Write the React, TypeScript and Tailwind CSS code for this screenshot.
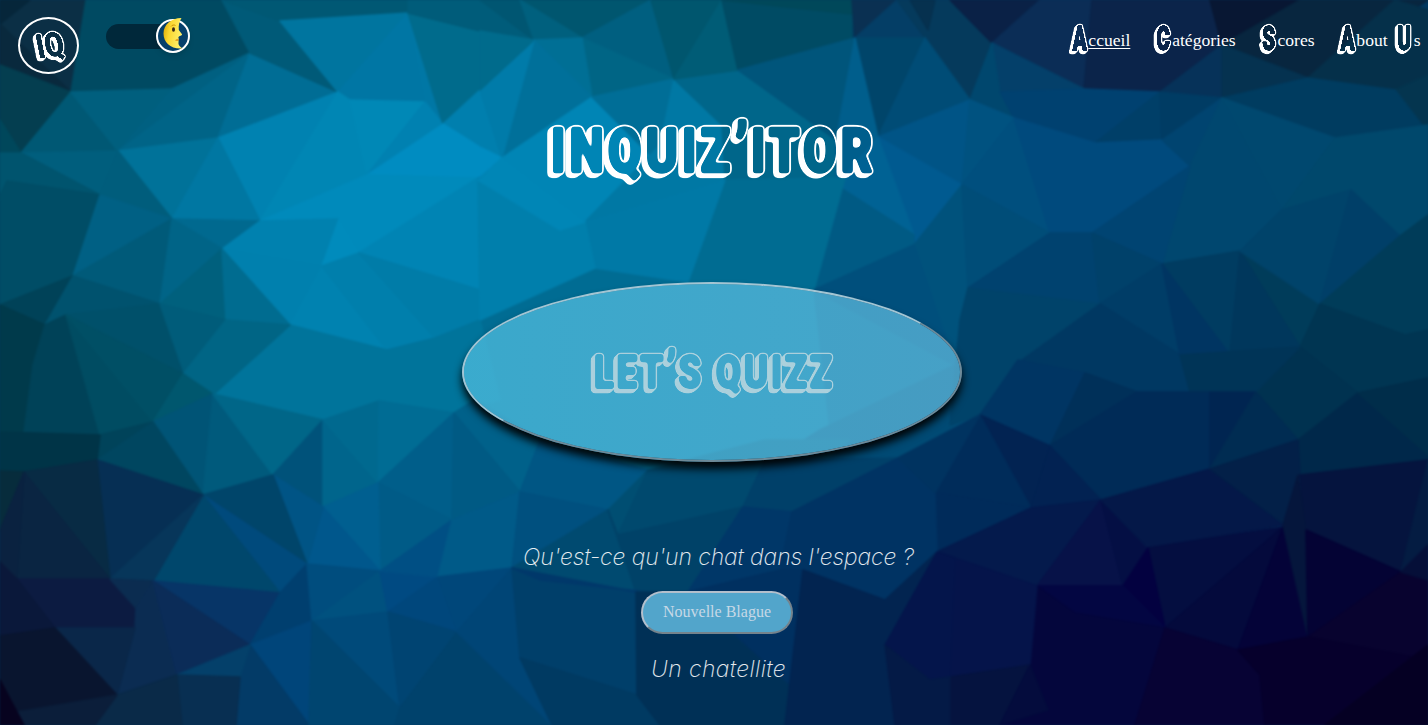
import React from "react";

type Facet = [string, string];

const FACETS: Facet[] = [
  ["480,320 595,268 688,282 814,290 970,300 980,415 898,470 648,480 454,430", "#006c93"],
  ["814,290 970,300 980,415 898,460 830,430", "#005a84"],
  ["955,365 980,415 898,462 765,465 820,430", "#004a74"],
  ["700,480 648,470 765,440 850,440 800,480", "#005578"],
  ["0,0 86,0 71,92 0,65", "#0b2f45"],
  ["0,24 30,0 0,0", "#06263a"],
  ["0,24 71,92 0,65", "#09293d"],
  ["0,65 71,92 21,153 0,120", "#043e50"],
  ["0,120 21,153 0,153", "#00475b"],
  ["86,0 222,0 250,53 172,89 71,92", "#004a62"],
  ["71,92 21,153 118,151", "#005874"],
  ["71,92 172,89 118,151", "#005f7e"],
  ["172,89 250,53 118,151", "#006081"],
  ["250,53 218,138 118,151", "#006487"],
  ["250,53 338,92 218,138", "#006d95"],
  ["250,53 222,0 280,21 338,92", "#005a78"],
  ["222,0 408,0 408,13 280,21", "#005874"],
  ["280,21 408,13 338,92", "#00759f"],
  ["408,13 425,102 350,100 338,92", "#0076a4"],
  ["338,92 218,138 260,221", "#0082b1"],
  ["338,92 260,221 367,175 350,100", "#0086b4"],
  ["118,151 218,138 172,219", "#007299"],
  ["218,138 260,221 172,219", "#0077a2"],
  ["350,100 425,102 367,175 359,140", "#0088b6"],
  ["408,13 443,124 425,102", "#0077a5"],
  ["425,102 443,124 367,175", "#0081b1"],
  ["408,13 480,31 480,90 443,124", "#006b8c"],
  ["480,90 502,158 443,124", "#007fae"],
  ["443,124 480,147 502,158 478,178 367,175", "#008cc1"],
  ["367,175 478,178 359,253 339,219 260,221", "#008abb"],
  ["172,219 260,221 222,249", "#00698f"],
  ["260,221 339,219 322,266 222,249", "#0081af"],
  ["339,219 359,253 322,266", "#008bbc"],
  ["478,178 480,290 359,253", "#0084b4"],
  ["222,249 322,266 290,325", "#0080ae"],
  ["322,266 387,350 290,325", "#0082b0"],
  ["322,266 359,253 435,338 387,350", "#007fac"],
  ["359,253 480,290 480,320 435,338", "#007ca8"],
  ["290,325 387,350 435,338 480,320 500,400 454,413 379,401 323,420 213,394", "#00749b"],
  ["21,153 118,151 100,195", "#005e7d"],
  ["118,151 172,219 100,195", "#005d7c"],
  ["0,153 21,153 100,195 7,181 0,200", "#00546e"],
  ["7,181 100,195 73,276 0,305 0,195", "#004d66"],
  ["100,195 172,219 73,276", "#006084"],
  ["172,219 73,276 160,304", "#005a79"],
  ["172,219 222,249 160,304", "#006487"],
  ["222,249 226,320 160,304", "#00607d"],
  ["222,249 290,325 226,320", "#006c90"],
  ["73,276 0,305 45,325", "#004258"],
  ["73,276 160,304 66,315 45,325", "#00526e"],
  ["66,315 160,304 183,374", "#00506a"],
  ["0,305 45,325 33,365 24,432 0,432", "#003a4b"],
  ["160,304 226,320 184,373", "#005c7a"],
  ["226,320 290,325 213,395 184,373", "#006585"],
  ["45,325 66,315 100,435 24,432 33,365", "#004258"],
  ["66,315 153,422 100,435", "#004c62"],
  ["66,315 183,374 153,422", "#004f65"],
  ["183,374 213,394 153,422", "#00576e"],
  ["153,422 213,394 203,495", "#005476"],
  ["213,394 273,475 203,495", "#005a7c"],
  ["100,435 153,422 97,460", "#00435a"],
  ["97,460 153,422 203,495", "#004660"],
  ["0,432 100,435 97,460 24,472 0,471", "#003447"],
  ["213,394 323,420 273,475", "#006688"],
  ["323,420 323,507 273,475", "#00527a"],
  ["323,420 378,483 323,507", "#00658c"],
  ["323,420 379,401 378,483", "#00698f"],
  ["379,401 454,413 378,483", "#006c94"],
  ["454,413 452,520 378,483", "#005e8a"],
  ["378,483 452,520 380,571", "#005b87"],
  ["323,507 378,483 380,571", "#005f90"],
  ["323,507 380,571 307,564", "#00578c"],
  ["273,475 323,507 307,564", "#005485"],
  ["203,495 273,475 307,564", "#00456a"],
  ["203,495 307,564 280,593", "#004a7c"],
  ["203,495 280,593 153,581", "#00476c"],
  ["97,460 203,495 110,579", "#062f54"],
  ["203,495 153,581 110,579", "#07365a"],
  ["24,472 97,460 110,579", "#082b44"],
  ["24,472 110,579 17,579", "#0a2542"],
  ["0,471 24,472 0,530", "#072c3c"],
  ["24,472 17,579 0,562 0,530", "#0a2240"],
  ["17,579 110,579 136,608 135,628 55,628", "#0c1b41"],
  ["110,579 153,581 136,608", "#0b2c50"],
  ["153,581 177,675 117,695 135,628 136,608", "#0b2c52"],
  ["55,628 135,628 117,695", "#0a2749"],
  ["0,562 17,579 55,628 0,636", "#0a183a"],
  ["0,636 55,628 117,695 17,712 0,680", "#09152f"],
  ["153,581 280,593 250,645", "#073567"],
  ["153,581 250,645 177,675", "#0b2c58"],
  ["280,593 307,564 312,621 250,645", "#003f6f"],
  ["250,645 312,621 309,725", "#00457a"],
  ["250,645 309,725 236,725 240,677", "#033b67"],
  ["250,645 177,675 240,677", "#04406a"],
  ["177,675 240,677 236,725 182,725", "#082f52"],
  ["117,695 177,675 182,725 95,725", "#0a2a48"],
  ["17,712 117,695 95,725 24,725", "#0b1e3a"],
  ["0,680 17,712 24,725 0,725", "#07031f"],
  ["307,564 380,571 312,621", "#004d7e"],
  ["380,571 388,612 312,621", "#00517f"],
  ["312,621 388,612 400,708", "#004a7a"],
  ["312,621 400,708 395,725 309,725", "#004570"],
  ["380,571 438,577 388,612", "#004a82"],
  ["452,520 438,577 380,571", "#004f84"],
  ["388,612 438,577 457,632", "#00477c"],
  ["388,612 457,632 400,708", "#004472"],
  ["457,632 500,620 552,725 395,725 400,708", "#00426c"],
  ["408,0 520,0 534,40 480,31 408,13", "#005c7a"],
  ["480,0 520,0 534,40", "#005672"],
  ["520,0 651,0 582,38 534,20", "#00566f"],
  ["520,0 582,38 534,40", "#00607e"],
  ["582,38 651,0 674,79", "#005f80"],
  ["582,38 674,79 592,97", "#006585"],
  ["534,40 582,38 592,97", "#006f95"],
  ["534,40 592,97 502,158", "#00709a"],
  ["480,90 534,40 502,158", "#007ba9"],
  ["480,31 534,40 480,90", "#006b8c"],
  ["502,158 592,97 660,165 585,222", "#0085b5"],
  ["592,97 674,79 660,165", "#006e97"],
  ["674,79 722,125 725,180 585,222 660,145", "#0078a4"],
  ["674,79 738,70 836,140 845,180 725,180 722,125", "#00668a"],
  ["651,0 722,0 674,79", "#00566e"],
  ["722,0 738,70 674,79", "#005c76"],
  ["722,0 852,14 852,38 738,70", "#004b64"],
  ["738,70 855,38 836,140", "#00557b"],
  ["722,0 852,0 852,14", "#00485a"],
  ["852,0 897,0 855,38", "#0a3052"],
  ["855,38 897,0 925,38", "#043e66"],
  ["897,0 950,0 992,43 970,100 925,38", "#053a5c"],
  ["910,0 935,0 928,30", "#06314f"],
  ["855,38 925,38 878,137", "#00456a"],
  ["855,38 878,137 836,185 836,140", "#005e8c"],
  ["925,38 970,100 878,137", "#004c76"],
  ["878,137 970,100 962,185", "#005486"],
  ["878,137 962,185 914,245", "#005a90"],
  ["836,185 878,137 914,235", "#006294"],
  ["836,185 914,235 914,245 814,290", "#005a84"],
  ["725,180 845,178 814,290 688,282", "#006c92"],
  ["585,222 725,180 688,282 595,268", "#0079a6"],
  ["478,178 560,230 585,222 595,268 480,320", "#007fac"],
  ["502,158 585,222 560,230 478,180", "#0086b6"],
  ["914,245 962,185 968,288 955,365 814,290", "#00527c"],
  ["914,245 814,290 955,365", "#004f7c"],
  ["950,0 1040,0 992,43", "#0a2146"],
  ["992,43 1040,0 1092,0 1084,89", "#0b2d56"],
  ["1092,0 1210,0 1222,45 1160,92 1084,89", "#0b244a"],
  ["1210,0 1300,0 1222,45", "#081733"],
  ["1222,45 1300,0 1428,0 1308,78", "#08263f"],
  ["1308,78 1395,0 1428,10 1428,78 1395,90", "#05304a"],
  ["1395,90 1428,75 1428,130 1422,125", "#04354f"],
  ["992,43 1084,89 1000,92", "#04406a"],
  ["970,100 992,43 1000,92 1014,118", "#00476e"],
  ["1000,92 1084,89 1160,92 1095,143 1014,118", "#004170"],
  ["1160,92 1162,140 1095,143", "#003f68"],
  ["1160,92 1222,45 1222,98", "#063259"],
  ["1160,92 1222,98 1162,140", "#003c64"],
  ["1222,45 1308,78 1222,98", "#053250"],
  ["1222,98 1308,78 1395,90 1422,125 1335,138", "#003c60"],
  ["970,100 1014,118 962,185", "#005280"],
  ["1014,118 1050,233 962,185", "#004f7e"],
  ["1014,118 1095,143 1162,140 1190,166 1092,233 1050,233", "#004a7d"],
  ["1162,140 1222,98 1190,166", "#004470"],
  ["1222,98 1282,210 1240,251 1162,264 1190,166", "#00476f"],
  ["1222,98 1335,138 1282,210", "#00486f"],
  ["1190,166 1162,264 1092,233", "#004472"],
  ["1335,138 1428,125 1428,215 1400,236 1351,190 1282,210", "#00486c"],
  ["962,185 1050,233 968,288", "#004d78"],
  ["1050,233 1092,233 1100,304 1003,300 968,288", "#00426f"],
  ["1092,233 1162,264 1100,304", "#00416a"],
  ["1162,264 1240,251 1230,355", "#003c61"],
  ["1162,264 1180,355 1100,304", "#003d67"],
  ["1162,264 1230,355 1180,355", "#003562"],
  ["1240,251 1320,304 1300,347", "#003c5a"],
  ["1240,251 1300,347 1230,355", "#00375c"],
  ["1282,210 1351,190 1320,304 1240,251", "#00436a"],
  ["1351,190 1400,236 1320,304", "#003f68"],
  ["1400,236 1428,215 1428,330 1405,335 1320,304", "#003c59"],
  ["968,288 1100,304 1018,362 980,415 950,425 960,320", "#00436a"],
  ["1100,304 1180,355 1190,392 1137,392 1085,373 1018,363", "#003862"],
  ["1320,304 1405,335 1428,330 1428,378 1358,393 1300,347", "#003552"],
  ["1300,347 1358,393 1298,440 1256,392", "#003250"],
  ["1180,355 1300,347 1256,392 1190,392", "#003457"],
  ["1018,360 1085,373 1050,446 980,415", "#003563"],
  ["1085,373 1137,392 1050,446", "#003059"],
  ["1137,392 1210,392 1210,469 1101,500 1050,446", "#002b57"],
  ["1210,392 1256,392 1210,469", "#002551"],
  ["1256,392 1298,440 1210,469", "#002c52"],
  ["1358,393 1428,455 1428,460 1300,475 1298,440", "#00284a"],
  ["1358,393 1428,378 1428,455", "#002d4a"],
  ["980,415 1050,446 1031,508", "#022352"],
  ["980,415 1031,508 935,493", "#002c5a"],
  ["935,493 950,495 1031,508 937,552", "#002b5a"],
  ["1050,446 1101,500 1031,508", "#022252"],
  ["1031,508 1101,500 1037,586 937,552", "#041a4c"],
  ["1101,500 1123,586 1037,586", "#071248"],
  ["1101,500 1148,548 1123,586", "#040f44"],
  ["1101,500 1210,469 1283,525 1148,548", "#041848"],
  ["1210,469 1298,440 1300,475 1285,525", "#032048"],
  ["1300,475 1428,460 1401,572 1305,530", "#05143e"],
  ["1428,460 1428,545 1401,572", "#041c42"],
  ["1148,548 1283,527 1165,628", "#040e40"],
  ["1283,527 1238,650 1165,628", "#040a3c"],
  ["1283,527 1308,637 1238,650", "#040338"],
  ["1298,475 1306,530 1308,637 1283,525", "#05163c"],
  ["1306,530 1401,572 1308,637", "#040334"],
  ["1401,572 1428,580 1428,660 1308,637", "#08032f"],
  ["1401,572 1428,545 1428,580", "#050f38"],
  ["1123,586 1148,548 1165,628", "#030140"],
  ["1037,586 1123,586 1165,628 1075,613", "#030642"],
  ["1037,586 1075,613 1165,628 1135,725 1000,725 1048,710 1030,665", "#04063c"],
  ["937,552 1037,586 1030,665 950,677", "#05144a"],
  ["950,677 1030,665 1000,725 950,725", "#05133f"],
  ["1030,665 1048,710 1000,725", "#040c3d"],
  ["1165,628 1238,650 1260,675 1265,725 1135,725", "#070334"],
  ["1238,650 1308,637 1428,660 1428,725 1265,725 1260,675", "#06002c"],
  ["1428,645 1428,725 1325,725", "#050023"],
  ["454,413 475,400 560,450 520,492", "#00618a"],
  ["452,520 454,413 520,492", "#005a84"],
  ["452,520 520,492 512,568 438,577", "#005a88"],
  ["520,492 540,440 648,470 608,510", "#005684"],
  ["520,492 608,510 512,568", "#00507f"],
  ["512,568 608,510 636,592", "#004a70"],
  ["608,510 648,470 618,535", "#004e72"],
  ["648,470 765,460 743,507 618,535", "#00496e"],
  ["765,460 898,458 792,512 743,507", "#004069"],
  ["608,510 618,535 743,507 688,592 636,592", "#004268"],
  ["743,507 792,512 780,570 688,592", "#003768"],
  ["792,512 898,458 935,493 937,552 885,600 780,570", "#003363"],
  ["898,458 980,415 935,493", "#003360"],
  ["512,568 438,577 457,632 500,640", "#00477a"],
  ["457,632 512,568 520,658 552,725", "#004576"],
  ["512,568 636,592 637,695 520,658", "#003f6a"],
  ["512,568 636,592 665,594 540,580", "#00386a"],
  ["520,658 637,695 660,725 552,725", "#003a62"],
  ["636,592 688,592 802,580 785,725 660,725 637,695", "#003056"],
  ["688,592 780,570 803,570 796,690", "#003060"],
  ["803,570 885,600 937,552 885,645 930,680 900,725 785,725", "#022450"],
  ["937,552 955,558 950,677 930,680 885,645", "#04154b"],
  ["885,645 930,680 950,677 950,725 895,725", "#041a46"],
];

function Backdrop() {
  return (
    <svg
      aria-hidden="true"
      className="absolute inset-0 h-full w-full"
      viewBox="0 0 1428 725"
      preserveAspectRatio="none"
    >
      <rect width="1428" height="725" fill="#003860" />
      <g strokeWidth="1.5" strokeLinejoin="round" className="blur-[1.1px]">
        {FACETS.map(([points, color], i) => (
          <polygon key={i} points={points} fill={color} stroke={color} />
        ))}
      </g>
    </svg>
  );
}

/* Turns plain glyphs into hollow, rounded, extruded lettering. */
function BubbleFilter({
  id,
  round,
  rim,
  steps,
}: {
  id: string;
  round: number;
  rim: number;
  steps: [number, number][];
}) {
  return (
    <filter id={id} x="-20%" y="-20%" width="140%" height="140%" colorInterpolationFilters="sRGB">
      <feGaussianBlur in="SourceGraphic" stdDeviation={round} />
      <feComponentTransfer result="face">
        <feFuncA type="linear" slope="5" intercept="-2" />
      </feComponentTransfer>
      <feGaussianBlur in="face" stdDeviation={rim} />
      <feComponentTransfer result="outer">
        <feFuncA type="linear" slope="8" intercept="-0.4" />
      </feComponentTransfer>
      {steps.map(([dx, dy], i) => (
        <feOffset key={i} in="outer" dx={dx} dy={dy} result={`s${i}`} />
      ))}
      <feMerge result="solid">
        <feMergeNode in="outer" />
        {steps.map((_, i) => (
          <feMergeNode key={i} in={`s${i}`} />
        ))}
      </feMerge>
      <feComposite in="solid" in2="face" operator="out" />
    </filter>
  );
}

function Filters() {
  return (
    <svg aria-hidden="true" className="absolute h-0 w-0">
      <BubbleFilter id="bubble-lg" round={1.8} rim={1.8} steps={[[-1, 1], [-2, 1], [-3, 2], [-4, 3]]} />
      <BubbleFilter id="bubble-md" round={1.4} rim={1.3} steps={[[-1, 1], [-2, 2], [-3, 3]]} />
      <BubbleFilter id="bubble-sm" round={0.6} rim={1} steps={[[-1, 1], [-2, 2]]} />
    </svg>
  );
}

function Moon() {
  return (
    <svg viewBox="0 0 24 34" className="absolute left-[4px] -top-[4px] h-[34px] w-[24px]">
      <defs>
        <linearGradient id="moon" x1="0" y1="0" x2="1" y2="0.3">
          <stop offset="0" stopColor="#d9a400" />
          <stop offset="0.4" stopColor="#fbd72f" />
          <stop offset="1" stopColor="#fff06a" />
        </linearGradient>
      </defs>
      <path
        d="M19.500 1C9 1 1.500 8 1.500 16.500C1.500 25.500 9 32.500 20.500 31.500C17.500 29.500 16 27.500 16.500 25.500C17 24 15.800 23.500 16.500 22.500C17.200 21.500 16 21 16.500 20C17 19 20.500 18.500 20 17.200L16.800 13C16.300 8 17.500 4 19.500 1Z"
        fill="url(#moon)"
      />
      <path d="M16.500 21.500C14.500 22 13.500 22.600 13 23.500C14.500 24.300 16 24 16.500 24" fill="#e8a322" />
      <ellipse cx="11.500" cy="12.500" rx="1.500" ry="2.300" fill="#3b2a17" />
      <path d="M9 9.500C10 8 12 7.500 13.500 8.500" stroke="#c98c00" strokeWidth="0.900" fill="none" />
    </svg>
  );
}

function Cap({ children }: { children: string }) {
  return (
    <span className="inline-flex h-[40px] w-[19px] translate-y-[4px] justify-center pl-px [filter:url(#bubble-sm)] font-['Roboto',sans-serif] text-[34px] font-black leading-[40px] [-webkit-text-stroke:1.3px_white]">
      <span className="inline-block origin-center scale-x-[.6]">{children}</span>
    </span>
  );
}

function NavItem({ words, active }: { words: string[]; active?: boolean }) {
  return (
    <a href="#" className="flex gap-[7px]">
      {words.map((w) => (
        <span key={w} className="flex items-baseline">
          <Cap>{w[0]}</Cap>
          <span className={active ? "underline underline-offset-2" : ""}>{w.slice(1)}</span>
        </span>
      ))}
    </a>
  );
}

export default function App() {
  return (
    <div className="relative h-[725px] w-full overflow-hidden bg-[#003860] font-['Liberation_Serif',serif] text-white">
      <Backdrop />
      <Filters />
      <div className="relative flex h-full flex-col items-center">
        <header className="flex h-[90px] w-full items-start justify-between pl-[18px] pr-[7.500px]">
          <div className="flex items-start">
            <div className="mt-[17px] flex h-[57px] w-[61px] items-center justify-center rounded-[50%] border-2 border-white">
              <span className="inline-block pl-[3px] [filter:url(#bubble-sm)]">
                <span className="inline-block -rotate-[8deg] skew-x-[4deg] scale-x-[.82] font-['Roboto',sans-serif] text-[34px] font-black leading-none">
                  IQ
                </span>
              </span>
            </div>
            <div className="ml-[27px] mt-[24px] flex h-[25px] w-[82px] rounded-full bg-[#00283a]">
              <div className="relative ml-[50px] -mt-[5px] h-[34px] w-[34px] shrink-0 rounded-full border-2 border-white bg-[#06406a] shadow-md">
                <Moon />
              </div>
            </div>
          </div>
          <nav className="mt-[14px] flex gap-[22.8px] text-[17.6px] leading-[40px]">
            <NavItem words={["Accueil"]} active />
            <NavItem words={["Catégories"]} />
            <NavItem words={["Scores"]} />
            <NavItem words={["About", "Us"]} />
          </nav>
        </header>

        <h1 className="mt-[19px] flex h-[84px] w-[400px] items-center justify-center whitespace-nowrap [filter:url(#bubble-lg)] font-['Roboto',sans-serif] text-[61px] font-black leading-[84px] tracking-[5px] [-webkit-text-stroke:2.5px_white]">
          <span className="flex scale-x-[.8]">
            <span>INQUIZ</span>
            <span className="-translate-y-[1px] text-[72px] tracking-[3px]">’</span>
            <span>ITOR</span>
          </span>
        </h1>

        <button className="mr-[4px] mt-[89px] flex h-[180px] w-[500px] items-center justify-center rounded-[50%] border-2 border-t-[#a3c5d3] border-l-[#a3c5d3] border-b-[#6f8a98] border-r-[#6f8a98] bg-linear-to-r from-[#53c2e3]/70 to-[#64bfe3]/70 bg-clip-padding shadow-[0_7px_9px_rgba(0,0,0,0.95)]">
          <span className="inline-block whitespace-nowrap text-[#abd0dc] [filter:url(#bubble-md)] font-['Roboto',sans-serif] text-[47px] font-black leading-[80px] tracking-[3.5px] [-webkit-text-stroke:2px_#abd0dc]">
            <span className="flex translate-x-[2px] scale-x-[.78]">
              <span>LET</span>
              <span className="-translate-y-[1px] text-[56px] tracking-[2px]">’</span>
              <span>S QUIZZ</span>
            </span>
          </span>
        </button>

        <p className="ml-[9px] mt-[78px] whitespace-nowrap font-['Inter',sans-serif] text-[23px] font-extralight italic leading-[34px] tracking-[-0.1px] text-white/90">
          Qu'est-ce qu'un chat dans l'espace ?
        </p>
        <button className="ml-[6px] mt-[17px] h-[43px] w-[152px] rounded-[22px] border-2 border-t-[#b3bfcc] border-l-[#b3bfcc] border-b-[#75838c] border-r-[#75838c] bg-[#52a5cb] pb-[2px] text-[16px] text-[#c6d8e6]">
          Nouvelle Blague
        </button>
        <p className="ml-[9px] mt-[18px] font-['Inter',sans-serif] text-[23px] font-extralight italic leading-[34px] tracking-[0.4px] text-white/90">
          Un chatellite
        </p>
      </div>
    </div>
  );
}
